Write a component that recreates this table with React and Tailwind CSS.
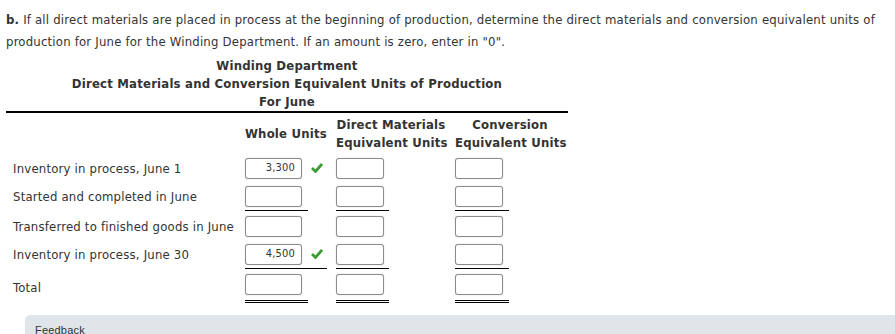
import React from 'react';

const Check = () => (
  <svg width="12" height="10" viewBox="0 0 12 10" className="ml-[9px]">
    <path d="M1 5 L4.5 8.5 L11 1" fill="none" stroke="#3d9b35" strokeWidth="2.8" />
  </svg>
);

const Box = ({ value, w }) => (
  <div
    className={`h-[21px] ${w} rounded-[3px] border border-[#8c8c8c] bg-white shadow-[0_0_1px_rgba(0,0,0,0.35)] flex items-center justify-end pr-[6px] text-[11px] text-[#333]`}
  >
    {value}
  </div>
);

const rows = [
  { label: 'Inventory in process, June 1', whole: '3,300', ok: true },
  { label: 'Started and completed in June', whole: '' },
  { label: 'Transferred to finished goods in June', whole: '' },
  { label: 'Inventory in process, June 30', whole: '4,500', ok: true },
];

const Row = ({ r }) => (
  <div className="flex items-center h-[28px]">
    <div className="w-[239px] pl-[7px] pt-[2px] whitespace-nowrap">{r.label}</div>
    <div className="w-[91px] flex items-center">
      <Box value={r.whole} w="w-[57px]" />
      {r.ok && <Check />}
    </div>
    <div className="w-[119px]">
      <Box value="" w="w-[48px]" />
    </div>
    <div className="w-[113px]">
      <Box value="" w="w-[48px]" />
    </div>
  </div>
);

const Rule = ({ whole, kind }) => {
  const cls = kind === 'double' ? 'border-t-[3px] border-double border-black' : 'border-t border-black';
  return (
    <div className="flex">
      <div className="w-[239px]" />
      <div className="w-[91px]">
        <div className={`${whole} ${cls}`} />
      </div>
      <div className="w-[119px]">
        <div className={`w-[53px] ${cls}`} />
      </div>
      <div className="w-[113px]">
        <div className={`w-[54px] ${cls}`} />
      </div>
    </div>
  );
};

export default function App() {
  return (
    <div
      className="bg-white w-[895px] h-[334px] overflow-hidden text-[13px] text-[#333] font-stretch-semi-condensed tracking-[0.2px]"
      style={{ fontFamily: '"DejaVu Sans Condensed", "DejaVu Sans", Verdana, sans-serif' }}
    >
      <div className="pl-[6px] pt-[9px]">
        <p className="leading-[22px] pr-[10px]">
          <b>b.</b> If all direct materials are placed in process at the beginning of production, determine the direct materials and conversion equivalent units of production for June for the Winding Department. If an amount is zero, enter in "0".
        </p>
        <div className="w-[562px] mt-[4px]">
          <div className="text-center font-bold leading-[18px]">
            <div>Winding Department</div>
            <div>Direct Materials and Conversion Equivalent Units of Production</div>
            <div>For June</div>
          </div>
          <div className="border-t-2 border-black" />
          <div className="flex items-center h-[41px] font-bold leading-[18px]">
            <div className="w-[239px]" />
            <div className="w-[91px] whitespace-nowrap">Whole Units</div>
            <div className="w-[119px] text-center pr-[9px] whitespace-nowrap">
              <div>Direct Materials</div>
              <div>Equivalent Units</div>
            </div>
            <div className="w-[113px] text-center pr-[3px] whitespace-nowrap">
              <div>Conversion</div>
              <div>Equivalent Units</div>
            </div>
          </div>
          <Row r={rows[0]} />
          <Row r={rows[1]} />
          <Rule whole="w-[63px]" kind="single" />
          <div className="h-[1px]" />
          <Row r={rows[2]} />
          <Row r={rows[3]} />
          <Rule whole="w-[82px]" kind="single" />
          <div className="flex items-center h-[31px]">
            <div className="w-[239px] pl-[7px] pt-[6px]">Total</div>
            <div className="w-[91px]"><Box value="" w="w-[57px]" /></div>
            <div className="w-[119px]"><Box value="" w="w-[48px]" /></div>
            <div className="w-[113px]"><Box value="" w="w-[48px]" /></div>
          </div>
          <Rule whole="w-[63px]" kind="double" />
        </div>
      </div>
      <div
        className="ml-[25px] mt-[12px] bg-[#dfe5e8] rounded-tl-[5px] h-[40px] pl-[10px] pt-[8px] text-[11px] leading-[14px] text-[#333]"
        style={{ fontFamily: '"Liberation Sans", Arial, sans-serif' }}
      >
        Feedback
      </div>
    </div>
  );
}
